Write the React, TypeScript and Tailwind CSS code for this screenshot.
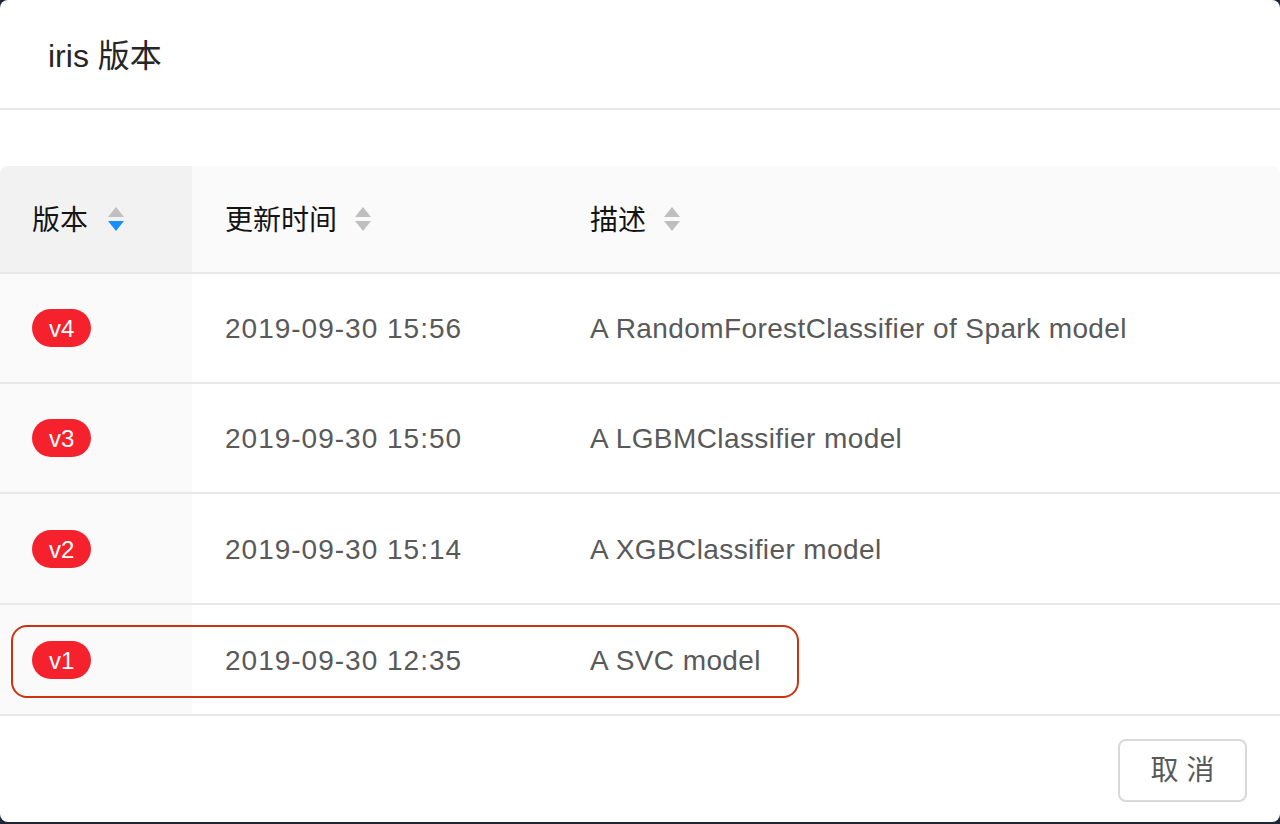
import React from "react";

type Version = {
  tag: string;
  updatedAt: string;
  description: string;
  rowClass: string;
  highlighted?: boolean;
};

const versions: Version[] = [
  { tag: "v4", updatedAt: "2019-09-30 15:56", description: "A RandomForestClassifier of Spark model", rowClass: "h-[110px]" },
  { tag: "v3", updatedAt: "2019-09-30 15:50", description: "A LGBMClassifier model", rowClass: "h-[110px]" },
  { tag: "v2", updatedAt: "2019-09-30 15:14", description: "A XGBClassifier model", rowClass: "h-[111px]" },
  { tag: "v1", updatedAt: "2019-09-30 12:35", description: "A SVC model", rowClass: "h-[111px]", highlighted: true },
];

const font = {
  fontFamily: '"Liberation Sans", "Noto Sans CJK SC", sans-serif',
};

function SortIcon({ active }: { active?: "up" | "down" }) {
  return (
    <svg width="16" height="24" viewBox="0 0 16 24" className="shrink-0">
      <path d="M8 0 L16 10 L0 10 Z" fill={active === "up" ? "#1890ff" : "#bfbfbf"} />
      <path d="M0 14 L16 14 L8 24 Z" fill={active === "down" ? "#1890ff" : "#bfbfbf"} />
    </svg>
  );
}

function HeaderCell({
  label,
  active,
  className,
}: {
  label: string;
  active?: "up" | "down";
  className: string;
}) {
  return (
    <div className={`flex items-center h-full ${className}`}>
      <span className="text-[28px] text-[#141414] pt-1">{label}</span>
      <SortIcon active={active} />
    </div>
  );
}

export default function App() {
  return (
    <div className="w-[1280px] h-[824px] bg-[#1c2733] overflow-hidden" style={font}>
      <div className="w-full h-[822px] bg-white rounded-[8px] flex flex-col overflow-hidden">
        <div className="h-[110px] flex items-center px-12 border-b-2 border-[#e8e8e8] shrink-0">
          <h1 className="text-[32px] text-[#262626] pt-1">iris 版本</h1>
        </div>

        <div className="pt-[56px] flex-1 flex flex-col">
          <div className="rounded-t-[8px] overflow-hidden">
            <div className="flex h-[108px] bg-[#fafafa] border-b-2 border-[#e8e8e8]">
              <HeaderCell label="版本" active="down" className="w-[192px] pl-8 gap-5 bg-[#f2f2f2]" />
              <HeaderCell label="更新时间" className="w-[365px] pl-[33px] gap-[18px]" />
              <HeaderCell label="描述" className="flex-1 pl-[33px] gap-[18px]" />
            </div>

            {versions.map((v) => (
              <div key={v.tag} className={`relative flex border-b-2 border-[#e8e8e8] ${v.rowClass}`}>
                <div className="w-[192px] pl-8 bg-[#fafafa] flex items-center">
                  <span className="h-[38px] px-[17px] rounded-full bg-[#f5222d] text-white text-[24px] flex items-center pt-0.5">
                    {v.tag}
                  </span>
                </div>
                <div className="w-[365px] pl-[33px] flex items-center text-[28px] text-[#595959] tracking-[1px] pt-0.5">
                  {v.updatedAt}
                </div>
                <div className="flex-1 pl-[33px] flex items-center text-[28px] text-[#595959] tracking-[0.4px] pt-0.5">
                  {v.description}
                </div>
                {v.highlighted && (
                  <div className="absolute left-[11px] top-[20px] w-[788px] h-[73px] rounded-[16px] border-2 border-[#cc3311]" />
                )}
              </div>
            ))}
          </div>

          <div className="flex-1 flex justify-end items-start pt-[23px] pr-[33px]">
            <button className="w-[129px] h-[63px] shrink-0 rounded-[8px] border-2 border-[#d9d9d9] bg-white text-[28px] text-[#595959] tracking-[8px] pl-2">
              取消
            </button>
          </div>
        </div>
      </div>
    </div>
  );
}
